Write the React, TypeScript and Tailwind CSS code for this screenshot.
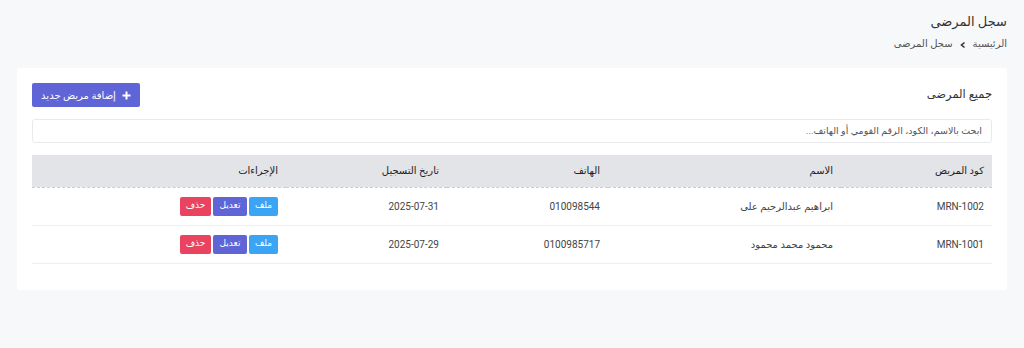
import React from "react";

const rows = [
  { code: "MRN-1002", name: "ابراهيم عبدالرحيم على", phone: "010098544", date: "2025-07-31" },
  { code: "MRN-1001", name: "محمود محمد محمود", phone: "0100985717", date: "2025-07-29" },
];

export default function App() {
  return (
    <div
      dir="rtl"
      className="w-[1024px] h-[348px] bg-[#f7f8fa] text-[#333] px-[17px] overflow-hidden"
      style={{ fontFamily: "Roboto, 'DejaVu Sans', sans-serif" }}
    >
      <div className="pt-[13px] pb-[17px]">
        <h1 className="text-[13px] leading-[18px] text-[#333]">سجل المرضى</h1>
        <div className="mt-[6px] flex items-center gap-[6px] text-[10px] leading-[14px] text-[#555]">
          <span>الرئيسية</span>
          <svg width="8" height="8" viewBox="0 0 8 8" className="mt-[1px]">
            <path d="M5.5 1.5 L2.5 4 L5.5 6.5" fill="none" stroke="#333" strokeWidth="1.6" />
          </svg>
          <span>سجل المرضى</span>
        </div>
      </div>

      <div className="bg-white rounded-[3px] px-[15px] pt-[15px] pb-[26px]">
        <div className="flex items-center justify-between h-[24px]">
          <h2 className="text-[11.5px] text-[#333]">جميع المرضى</h2>
          <button className="h-[24px] w-[108px] flex items-center justify-center gap-[6px] rounded-[2px] bg-[#5f64d6] text-white text-[10px]">
            <svg width="9" height="9" viewBox="0 0 9 9">
              <path d="M4.5 0.5 V8.5 M0.5 4.5 H8.5" stroke="white" strokeWidth="2" />
            </svg>
            <span>إضافة مريض جديد</span>
          </button>
        </div>

        <div className="mt-[12px] h-[24px] border border-[#e8eaed] rounded-[3px] flex items-center px-[9px] text-[9.5px] text-[#555]">
          ابحث بالاسم، الكود، الرقم القومي أو الهاتف...
        </div>

        <table className="mt-[12px] w-full border-collapse text-[10px]">
          <colgroup>
            <col className="w-[151px]" />
            <col className="w-[233px]" />
            <col className="w-[161px]" />
            <col className="w-[161px]" />
            <col />
          </colgroup>
          <thead>
            <tr className="bg-[#e2e4e8] h-[32px] border-b border-dashed border-[#c9ccd1]">
              {["كود المريض", "الاسم", "الهاتف", "تاريخ التسجيل", "الإجراءات"].map((h) => (
                <th key={h} className="text-right font-normal text-[10px] text-[#222] px-[8px]">
                  {h}
                </th>
              ))}
            </tr>
          </thead>
          <tbody>
            {rows.map((r) => (
              <tr key={r.code} className="h-[38px] border-b border-[#eceef1] text-[#444]">
                <td className="px-[8px]">{r.code}</td>
                <td className="px-[8px]">{r.name}</td>
                <td className="px-[8px]">{r.phone}</td>
                <td className="px-[8px]">{r.date}</td>
                <td className="px-[8px]">
                  <div className="flex gap-[2px]">
                    <span className="h-[19px] w-[29px] rounded-[2px] bg-[#3ca4f4] text-white text-[9px] flex items-center justify-center">ملف</span>
                    <span className="h-[19px] w-[34px] rounded-[2px] bg-[#5f64d6] text-white text-[9px] flex items-center justify-center">تعديل</span>
                    <span className="h-[19px] w-[31px] rounded-[2px] bg-[#e9435f] text-white text-[9px] flex items-center justify-center">حذف</span>
                  </div>
                </td>
              </tr>
            ))}
          </tbody>
        </table>
      </div>
    </div>
  );
}
